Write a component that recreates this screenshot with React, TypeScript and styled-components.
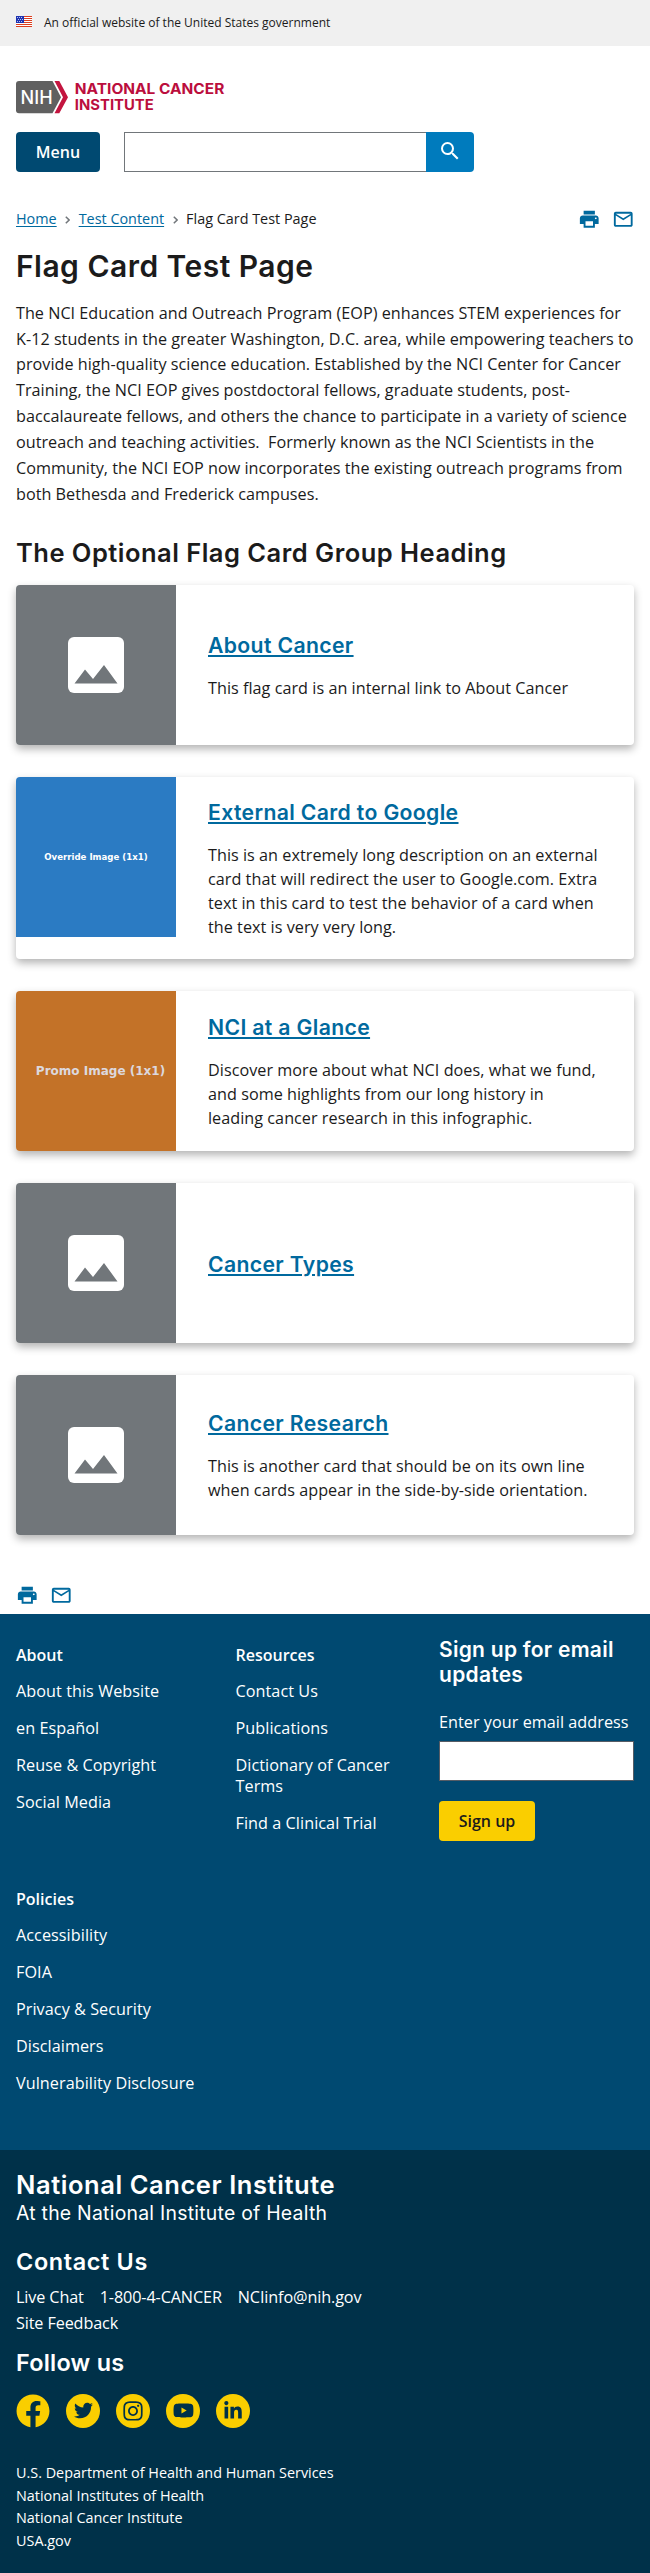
import React from 'react';
import styled, { createGlobalStyle } from 'styled-components';
import { MdPrint, MdMailOutline, MdSearch } from 'react-icons/md';
import { FaFacebook, FaTwitter, FaInstagram, FaYoutube, FaLinkedinIn } from 'react-icons/fa';

const body = '"Open Sans", "Noto Sans", sans-serif';
const display = 'Inter, "Noto Sans", sans-serif';

const GlobalStyle = createGlobalStyle`
  *, *::before, *::after { box-sizing: border-box; }
  body { margin: 0; background: #fff; color: #1b1b1b; font: 16.2px/25.92px ${body}; }
  h1, h2, h3, p, ul { margin: 0; padding: 0; }
  ul { list-style: none; }
  a { color: inherit; text-decoration: none; }
  svg { display: block; }
`;

const Page = styled.div`width: 650px;`;

const Banner = styled.div`
  display: flex;
  align-items: center;
  gap: 12px;
  height: 46px;
  padding: 0 16px;
  background: #f0f0f0;
  font-size: 12px;
  line-height: 46px;
`;
const FlagIcon = styled.svg`
  width: 16px;
  height: 11px;
  margin-top: -3px;
`;

const Header = styled.header`padding: 35px 16px 0;`;
const Logo = styled.svg`width: 210px; height: 33px;`;
const Toolbar = styled.div`
  display: flex;
  gap: 24px;
  margin-top: 18px;
`;
const Button = styled.button<{ $accent?: boolean }>`
  width: ${p => (p.$accent ? 96 : 84)}px;
  height: 40px;
  padding: 0;
  border: 0;
  border-radius: 4px;
  background: ${p => (p.$accent ? '#face00' : '#004971')};
  color: ${p => (p.$accent ? '#1b1b1b' : '#fff')};
  font: 600 16px/40px ${body};
`;
const Search = styled.form`display: flex;`;
const SearchInput = styled.input`
  width: 302px;
  height: 40px;
  border: 1px solid #71767a;
  border-right: 0;
  border-radius: 0;
`;
const SearchButton = styled.button`
  display: flex;
  align-items: center;
  justify-content: center;
  width: 48px;
  height: 40px;
  padding: 0 0 2px;
  border: 0;
  border-radius: 0 4px 4px 0;
  background: #007bbd;
  color: #fff;
`;

const Main = styled.main`padding: 35px 16px 7px;`;
const TopRow = styled.div`
  display: flex;
  justify-content: space-between;
  height: 24px;
`;
const Crumbs = styled.nav`
  display: flex;
  align-items: center;
  font-size: 14.4px;
  line-height: 24px;
`;
const CrumbLink = styled.a`
  color: #00699e;
  text-decoration: underline;
  text-underline-offset: 2px;
`;
const Chevron = styled.svg`width: 5px; height: 8px; margin: 2px 8.6px 0 8.4px;`;
const Share = styled.div`
  display: flex;
  align-items: center;
  gap: 11.5px;
  height: 24px;
  color: #00699e;
`;

const PageTitle = styled.h1`
  margin-top: 17px;
  font: 600 30px/36px ${display};
  letter-spacing: 0.47px;
`;
const Intro = styled.p`
  margin-top: 16.6px;
  letter-spacing: 0.01px;
`;
const GroupTitle = styled.h2`
  margin: 29.5px 0 15.54px;
  font: 600 25.5px/32px ${display};
  letter-spacing: 0.48px;
`;

const Cards = styled.div`
  display: flex;
  flex-direction: column;
  gap: 32px;
  margin-bottom: 48px;
`;
const Card = styled.article`
  display: flex;
  min-height: 160px;
  border-radius: 4px;
  overflow: hidden;
  box-shadow: 0 4px 8px rgba(0, 0, 0, 0.3);
`;
const Thumb = styled.div<{ $bg: string; $color?: string; $size?: number; $shift?: number }>`
  display: flex;
  align-items: center;
  justify-content: center;
  flex: none;
  width: 160px;
  height: 160px;
  padding-left: ${p => p.$shift || 0}px;
  background: ${p => p.$bg};
  color: ${p => p.$color || '#fff'};
  font: 700 ${p => p.$size || 12}px/18px "DejaVu Sans", sans-serif;
  white-space: nowrap;
`;
const CardBody = styled.div`
  display: flex;
  flex-direction: column;
  justify-content: center;
  padding: 20px 32px;
`;
const CardTitle = styled.h3`
  padding-top: 1px;
  color: #00699e;
  font: 600 21.2px/28px ${display};
  letter-spacing: 0.35px;
  text-decoration: underline;
  text-decoration-thickness: 2px;
  text-underline-offset: 2px;
`;
const CardText = styled.p`
  max-width: 392px;
  margin-top: 17px;
  font-size: 16.2px;
  line-height: 24px;
  letter-spacing: 0.03px;
`;

const FooterMain = styled.footer`
  display: flex;
  justify-content: space-between;
  height: 536px;
  padding: 22px 16px 0;
  background: #004971;
  color: #fff;
`;
const LinkGroups = styled.div`
  display: grid;
  grid-template-columns: 219.5px 170px;
  align-content: start;
  row-gap: 55px;
  margin-top: 8.5px;
`;
const GroupName = styled.h3`
  margin-bottom: 15px;
  font: 600 16px/21px ${body};
`;
const GroupList = styled.ul`
  display: flex;
  flex-direction: column;
  gap: 16px;
  font-size: 16.2px;
  line-height: 21px;
  letter-spacing: 0.06px;
`;
const Signup = styled.form`width: 195px; padding-top: 1.4px;`;
const SignupTitle = styled.h2`
  font: 600 21px/25px ${display};
  letter-spacing: 0.27px;
`;
const Label = styled.label`
  display: block;
  margin: 21.6px 0 6px;
  font-size: 16.2px;
  line-height: 26px;
  letter-spacing: 0.04px;
  white-space: nowrap;
`;
const EmailInput = styled.input`
  display: block;
  width: 195px;
  height: 40px;
  margin-bottom: 20px;
  border: 1px solid #565c65;
  border-radius: 0;
  background: #fff;
`;

const FooterAgency = styled.footer`
  height: 423px;
  padding: 19.6px 16px 0;
  background: #003149;
  color: #fff;
`;
const Agency = styled.h2`
  font: 600 25.5px/30px ${display};
  letter-spacing: 0.57px;
`;
const Parent = styled.p`
  padding-top: 0.5px;
  font: 400 19.4px/26px ${display};
  letter-spacing: 0.25px;
`;
const SectionTitle = styled.h3<{ $top: number; $spacing: number }>`
  margin-top: ${p => p.$top}px;
  font: 600 23.4px/28px ${display};
  letter-spacing: ${p => p.$spacing}px;
`;
const ContactLinks = styled.ul`
  display: flex;
  flex-wrap: wrap;
  column-gap: 16px;
  width: 370px;
  margin-top: 7.6px;
  line-height: 26px;
  letter-spacing: -0.12px;
`;
const Socials = styled.div`
  display: flex;
  gap: 16px;
  margin-top: 16.8px;
`;
const Circle = styled.a<{ $bare?: boolean }>`
  display: flex;
  align-items: center;
  justify-content: center;
  width: 34px;
  height: 34px;
  border-radius: 50%;
  background: ${p => (p.$bare ? 'transparent' : '#face00')};
  color: ${p => (p.$bare ? '#face00' : '#003149')};
`;
const Related = styled.ul`
  margin-top: 33.8px;
  font-size: 14.4px;
  line-height: 22.8px;
`;

const ShareIcons = () => (
  <Share>
    <MdPrint size={22.5} />
    <MdMailOutline size={22.5} />
  </Share>
);

const Separator = () => (
  <Chevron viewBox="0 0 5 8" fill="none" stroke="#71767a" strokeWidth="1.5">
    <path d="M0.8 0.7 4.1 4 0.8 7.3" />
  </Chevron>
);

const Placeholder = () => (
  <Thumb $bg="#71767a">
    <svg width="56" height="56" viewBox="0 0 56 56">
      <rect width="56" height="56" rx="6" fill="#fff" />
      <path d="M6.5 46.5 17 32.5 25 42 36 28 49.5 46.5Z" fill="#71767a" />
    </svg>
  </Thumb>
);

const cards: { title: string; text?: string; thumb: React.ReactNode }[] = [
  { title: 'About Cancer', text: 'This flag card is an internal link to About Cancer', thumb: <Placeholder /> },
  {
    title: 'External Card to Google',
    text: 'This is an extremely long description on an external card that will redirect the user to Google.com. Extra text in this card to test the behavior of a card when the text is very very long.',
    thumb: <Thumb $bg="#2b7bc3" $size={8.6}>Override Image (1x1)</Thumb>,
  },
  {
    title: 'NCI at a Glance',
    text: 'Discover more about what NCI does, what we fund, and some highlights from our long history in leading cancer research in this infographic.',
    thumb: <Thumb $bg="#c37228" $color="#dcd8de" $size={12} $shift={9}>Promo Image (1x1)</Thumb>,
  },
  { title: 'Cancer Types', thumb: <Placeholder /> },
  {
    title: 'Cancer Research',
    text: 'This is another card that should be on its own line when cards appear in the side-by-side orientation.',
    thumb: <Placeholder />,
  },
];

const groups = [
  { name: 'About', links: ['About this Website', 'en Español', 'Reuse & Copyright', 'Social Media'] },
  { name: 'Resources', links: ['Contact Us', 'Publications', 'Dictionary of Cancer Terms', 'Find a Clinical Trial'] },
  { name: 'Policies', links: ['Accessibility', 'FOIA', 'Privacy & Security', 'Disclaimers', 'Vulnerability Disclosure'] },
];

export default function App() {
  return (
    <Page>
      <GlobalStyle />
      <Banner>
        <FlagIcon viewBox="0 0 16 11">
          <rect width="16" height="11" fill="#fff" />
          {[0, 2, 4, 6, 8, 10].map(y => <rect key={y} y={y} width="16" height="1" fill="#db3e1f" />)}
          <rect width="8" height="7" fill="#1e33b1" />
          {[1, 3, 5].map(y => [1, 3, 5].map(x => (
            <rect key={`${x}-${y}`} x={x + (y === 3 ? 1 : 0)} y={y} width="1" height="1" fill="#b8c0ee" />
          )))}
        </FlagIcon>
        An official website of the United States government
      </Banner>

      <Header>
        <Logo viewBox="0 0 210 33">
          <path d="M3 0H36.5L45 16.2 36.5 32.3H3Q0 32.3 0 29.3V3Q0 0 3 0Z" fill="#606060" />
          <path d="M38.5 0H43.3L52 16.2 43.3 32.3H38.5L47 16.2Z" fill="#c3153f" />
          <text x="4.6" y="22.8" textLength="32" lengthAdjust="spacingAndGlyphs" fontFamily={display} fontSize="19.3" fontWeight="500" fill="#fff">NIH</text>
          <g fontFamily={display} fontSize="14.2" fontWeight="700" fill="#bb0e3d">
            <text x="58.8" y="13.4" textLength="149.5" lengthAdjust="spacingAndGlyphs">NATIONAL CANCER</text>
            <text x="58.8" y="29.2" textLength="79" lengthAdjust="spacingAndGlyphs">INSTITUTE</text>
          </g>
        </Logo>
        <Toolbar>
          <Button type="button">Menu</Button>
          <Search>
            <SearchInput aria-label="Search" />
            <SearchButton type="button" aria-label="Submit search"><MdSearch size={24} /></SearchButton>
          </Search>
        </Toolbar>
      </Header>

      <Main>
        <TopRow>
          <Crumbs>
            <CrumbLink href="#">Home</CrumbLink>
            <Separator />
            <CrumbLink href="#">Test Content</CrumbLink>
            <Separator />
            <span>Flag Card Test Page</span>
          </Crumbs>
          <ShareIcons />
        </TopRow>
        <PageTitle>Flag Card Test Page</PageTitle>
        <Intro>
          The NCI Education and Outreach Program (EOP) enhances STEM experiences for K-12 students in the greater
          Washington, D.C. area, while empowering teachers to provide high-quality science education. Established by
          the NCI Center for Cancer Training, the NCI EOP gives postdoctoral fellows, graduate students,
          post-baccalaureate fellows, and others the chance to participate in a variety of science outreach and
          teaching activities.&nbsp; Formerly known as the NCI Scientists in the Community, the NCI EOP now
          incorporates the existing outreach programs from both Bethesda and Frederick campuses.
        </Intro>
        <GroupTitle>The Optional Flag Card Group Heading</GroupTitle>
        <Cards>
          {cards.map(c => (
            <Card key={c.title}>
              {c.thumb}
              <CardBody>
                <CardTitle>{c.title}</CardTitle>
                {c.text && <CardText>{c.text}</CardText>}
              </CardBody>
            </Card>
          ))}
        </Cards>
        <ShareIcons />
      </Main>

      <FooterMain>
        <LinkGroups>
          {groups.map(g => (
            <div key={g.name}>
              <GroupName>{g.name}</GroupName>
              <GroupList>{g.links.map(l => <li key={l}><a href="#">{l}</a></li>)}</GroupList>
            </div>
          ))}
        </LinkGroups>
        <Signup>
          <SignupTitle>Sign up for email updates</SignupTitle>
          <Label htmlFor="email">Enter your email address</Label>
          <EmailInput id="email" />
          <Button type="button" $accent>Sign up</Button>
        </Signup>
      </FooterMain>

      <FooterAgency>
        <Agency>National Cancer Institute</Agency>
        <Parent>At the National Institute of Health</Parent>
        <SectionTitle $top={21.9} $spacing={0.65}>Contact Us</SectionTitle>
        <ContactLinks>
          {['Live Chat', '1-800-4-CANCER', 'NCIinfo@nih.gov', 'Site Feedback'].map(l => (
            <li key={l}><a href="#">{l}</a></li>
          ))}
        </ContactLinks>
        <SectionTitle $top={13.6} $spacing={0.25}>Follow us</SectionTitle>
        <Socials>
          <Circle $bare href="#" aria-label="Facebook"><FaFacebook size={34} /></Circle>
          <Circle href="#" aria-label="Twitter"><FaTwitter size={19} /></Circle>
          <Circle href="#" aria-label="Instagram"><FaInstagram size={22} /></Circle>
          <Circle href="#" aria-label="YouTube"><FaYoutube size={21} /></Circle>
          <Circle href="#" aria-label="LinkedIn"><FaLinkedinIn size={20} /></Circle>
        </Socials>
        <Related>
          <li>U.S. Department of Health and Human Services</li>
          <li>National Institutes of Health</li>
          <li>National Cancer Institute</li>
          <li>USA.gov</li>
        </Related>
      </FooterAgency>
    </Page>
  );
}
